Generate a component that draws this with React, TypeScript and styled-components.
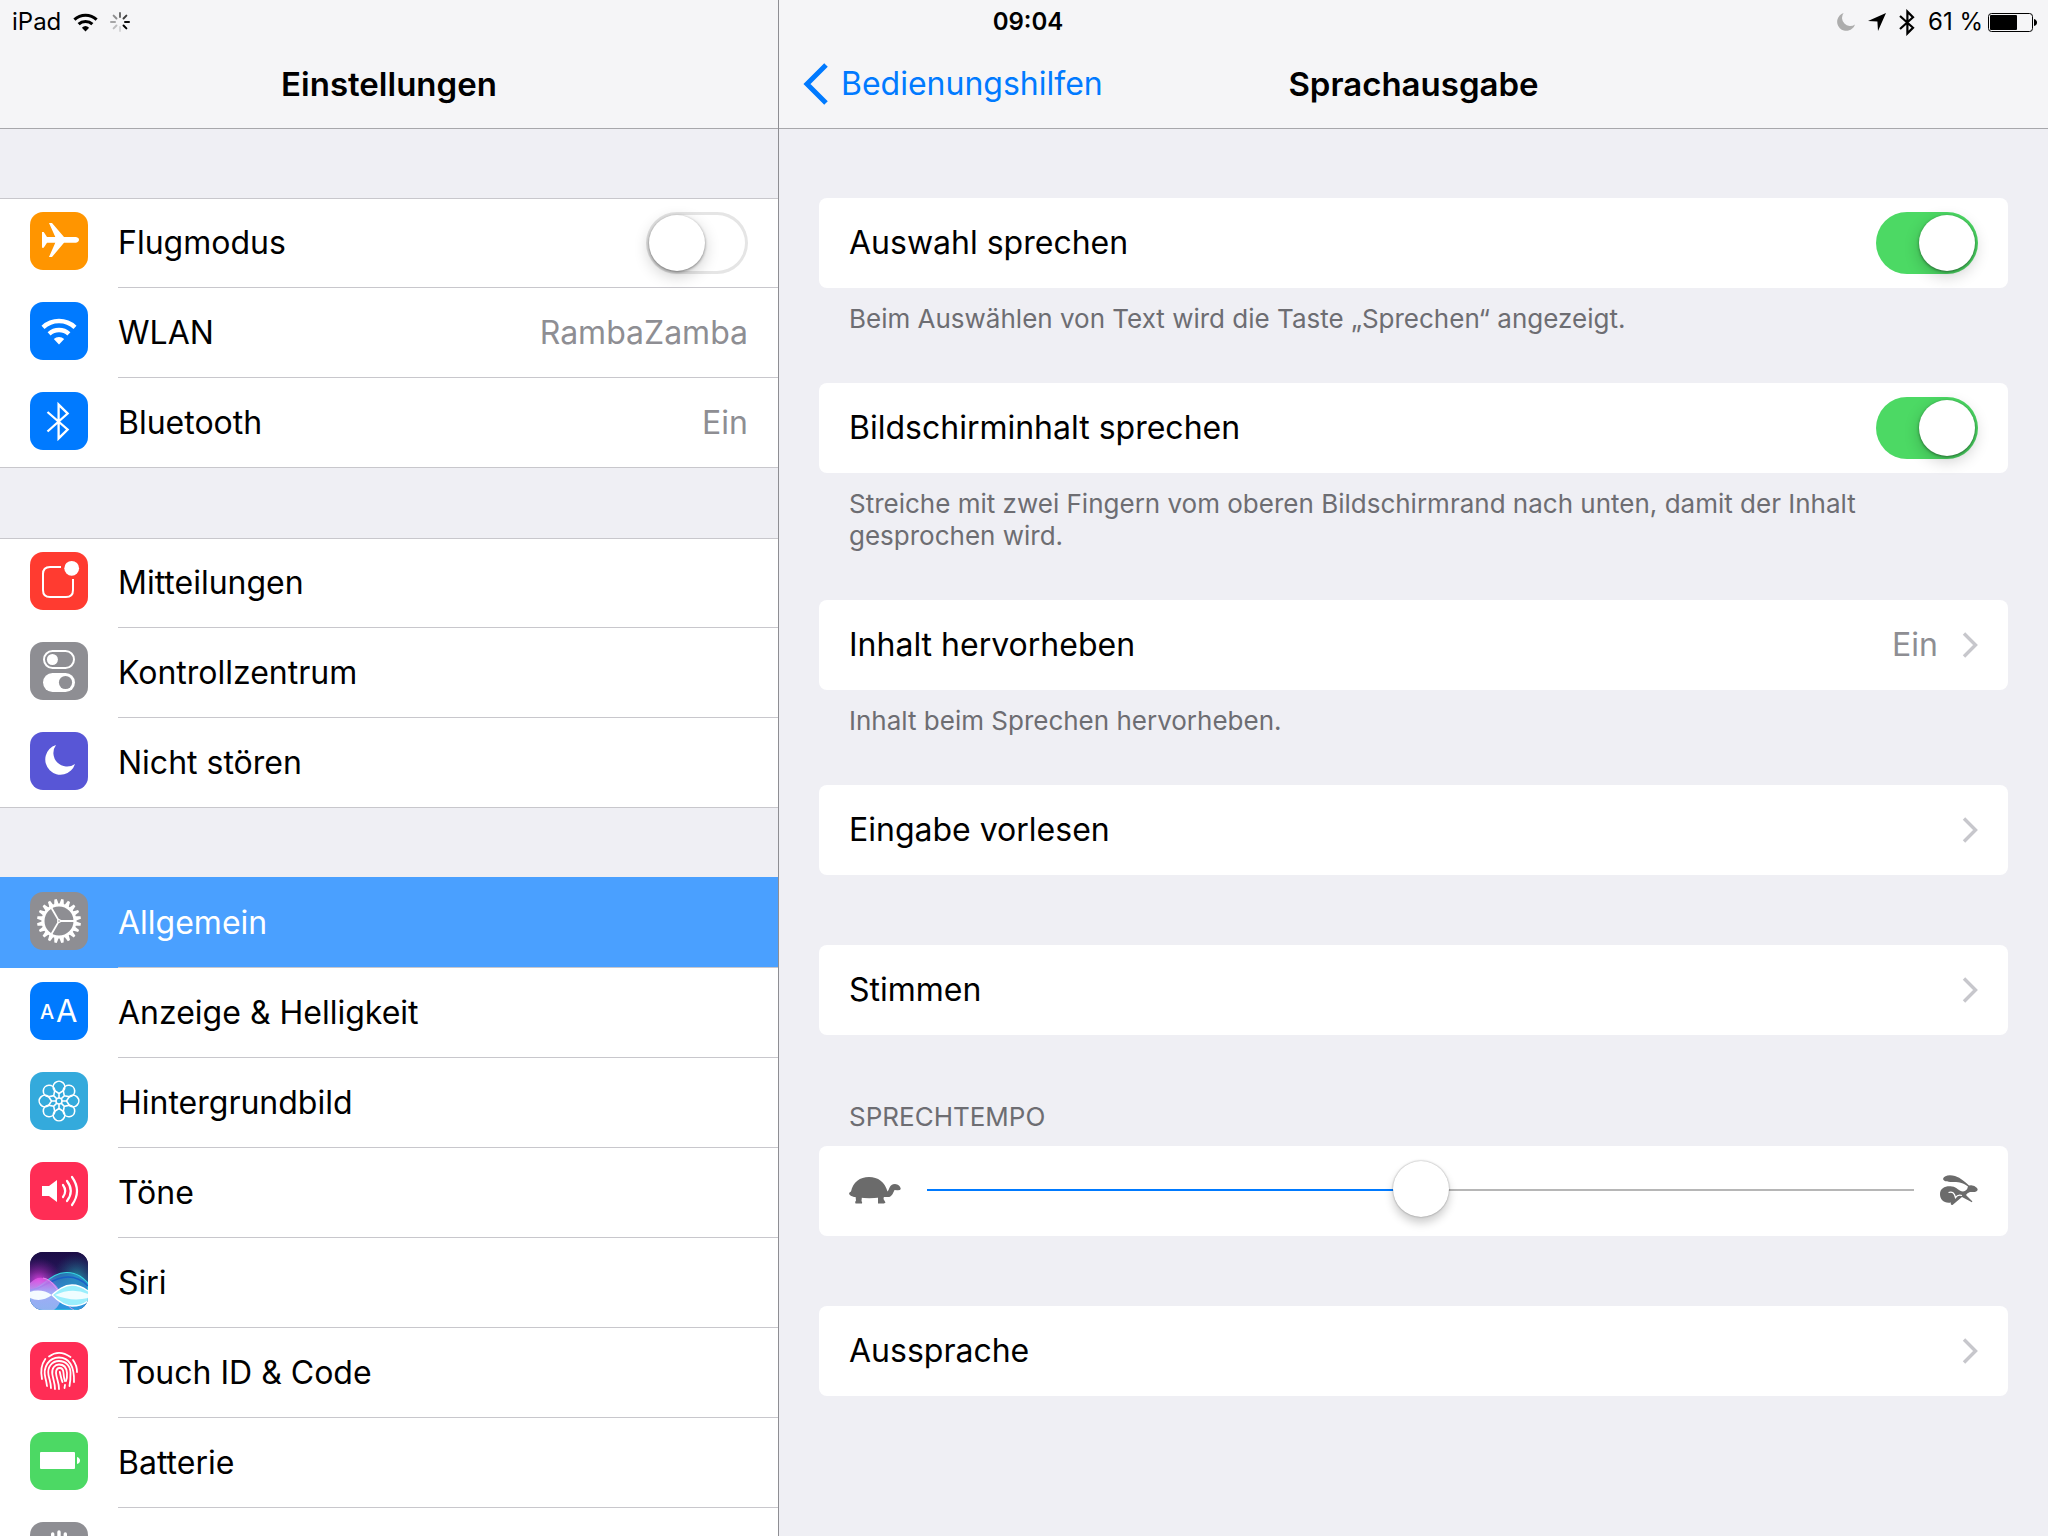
import React, { useId, useState } from "react";
import styled, { createGlobalStyle } from "styled-components";

const color = {
  page: "#efeff4",
  bar: "#f5f5f7",
  barLine: "#a7a7ab",
  line: "#c8c7cc",
  divider: "#8e8e93",
  blue: "#007aff",
  selected: "#4aa0ff",
  green: "#4cd964",
  grey: "#8e8e93",
  note: "#6d6d72",
};

const GlobalStyle = createGlobalStyle`
  *, *::before, *::after { box-sizing: border-box; }
  body {
    margin: 0;
    background: ${color.page};
    color: #000;
    font-family: Inter, "Liberation Sans", sans-serif;
    font-size: 32px;
    line-height: 40px;
  }
  h1, h2, p { margin: 0; }
  a { color: inherit; text-decoration: none; }
  svg { display: block; flex: none; }
`;

/* ---------- frame ---------- */

const Screen = styled.div`
  display: grid;
  grid-template-columns: 779px 1fr;
  grid-template-rows: 40px 1fr;
  height: 100vh;
  overflow: hidden;
`;

const StatusBar = styled.div`
  grid-column: 1 / 3;
  grid-row: 1;
  z-index: 1;
  display: grid;
  grid-template-columns: 1fr auto 1fr;
  align-items: center;
  padding: 2px 4px 0 12px;
  font-size: 24px;
`;

const StatusSide = styled.div<{ $end?: boolean }>`
  display: flex;
  align-items: center;
  justify-content: ${(p) => (p.$end ? "flex-end" : "flex-start")};
  gap: ${(p) => (p.$end ? "13px" : "12px")};
  padding-right: ${(p) => (p.$end ? "7px" : "0")};
`;

const Charge = styled.span`
  display: flex;
  align-items: center;
  gap: 5px;
`;

const Clock = styled.time`
  font-weight: 600;
`;

const Sidebar = styled.nav`
  grid-column: 1;
  grid-row: 1 / 3;
  min-height: 0;
  overflow: hidden;
  border-right: 1px solid ${color.divider};
`;

const Detail = styled.main`
  grid-column: 2;
  grid-row: 1 / 3;
  min-height: 0;
  overflow: hidden;
`;

const NavBar = styled.header`
  display: grid;
  grid-template-columns: 1fr auto 1fr;
  align-items: center;
  height: 128px;
  padding: 40px 24px 0;
  background: ${color.bar};
  box-shadow: 0 1px 0 ${color.barLine};
`;

const Title = styled.h1`
  grid-column: 2;
  font-size: 33px;
  font-weight: 600;
`;

const BackLink = styled.a`
  display: flex;
  align-items: center;
  gap: 12px;
  color: ${color.blue};
`;

/* ---------- sidebar list ---------- */

const MenuGroup = styled.div`
  margin-top: 70px;
`;

const MenuRow = styled.div<{ $selected?: boolean }>`
  display: flex;
  gap: 30px;
  height: 90px;
  padding-left: 30px;
  background: ${(p) => (p.$selected ? color.selected : "#fff")};
  color: ${(p) => (p.$selected ? "#fff" : "#000")};

  &:first-child {
    box-shadow: ${(p) =>
      p.$selected ? `0 -1px 0 ${color.selected}` : `inset 0 1px 0 ${color.line}`};
  }
  &:last-child {
    box-shadow: inset 0 -1px 0 ${color.line};
  }
`;

const Tile = styled.svg`
  width: 58px;
  height: 58px;
  margin-top: 14px;
  border-radius: 13px;
`;

const MenuBody = styled.span`
  display: flex;
  flex: 1;
  align-items: center;
  justify-content: space-between;
  padding-right: 30px;
  border-bottom: 1px solid ${color.line};
`;

const Value = styled.span`
  color: ${color.grey};
`;

/* ---------- detail cards ---------- */

const Cards = styled.div`
  padding: 70px 40px;
`;

const Section = styled.section`
  & + & { margin-top: 70px; }
`;

const NotedSection = styled.section`
  margin-bottom: 48px;
`;

const Card = styled.div`
  display: flex;
  align-items: center;
  justify-content: space-between;
  gap: 26px;
  height: 90px;
  padding: 0 30px;
  border-radius: 8px;
  background: #fff;
`;

const SliderCard = styled(Card)`
  padding-bottom: 2px;
`;

const Note = styled.p`
  padding: 15px 100px 0 30px;
  color: ${color.note};
  font-size: 26px;
  line-height: 32px;
`;

const SliderSection = styled.section`
  margin: 66px 0 70px;
`;

const Caption = styled.label`
  display: block;
  padding: 0 30px 13px;
  color: ${color.note};
  font-size: 26px;
  line-height: 32px;
`;

const Trailing = styled.span`
  display: flex;
  align-items: center;
  gap: 24px;
`;

/* ---------- controls ---------- */

const Switch = styled.input`
  appearance: none;
  flex: none;
  width: 102px;
  height: 62px;
  margin: 0;
  padding: 3px;
  border-radius: 31px;
  background: #fff;
  box-shadow: inset 0 0 0 3px #e5e5e5;
  cursor: pointer;

  &::before {
    content: "";
    display: block;
    width: 56px;
    height: 56px;
    border-radius: 50%;
    background: #fff;
    box-shadow: 0 1px 3px rgba(0, 0, 0, 0.45), 0 5px 16px rgba(0, 0, 0, 0.2);
  }
  &:checked {
    background: ${color.green};
    box-shadow: none;
  }
  &:checked::before {
    margin-left: 40px;
  }
`;

const Range = styled.input`
  appearance: none;
  flex: 1;
  min-width: 0;
  height: 58px;
  margin: 0;
  background: transparent;

  &::-webkit-slider-runnable-track {
    height: 2px;
    background: linear-gradient(
      to right,
      ${color.blue} var(--filled),
      #b6b6b6 var(--filled)
    );
  }
  &::-webkit-slider-thumb {
    appearance: none;
    width: 56px;
    height: 56px;
    margin-top: -28px;
    border-radius: 50%;
    background: #fff;
    box-shadow: 0 0 2px rgba(0, 0, 0, 0.4), 0 6px 10px rgba(0, 0, 0, 0.2);
  }
`;

/* ---------- status icons ---------- */

const WifiShape = () => (
  <g fill="none" stroke="currentColor" strokeWidth="4.4">
    <path d="M13 25.3A23.5 23.5 0 0 1 45 25.3" />
    <path d="M19.1 31.9A14.5 14.5 0 0 1 38.9 31.9" />
    <path d="M23.8 37A7.7 7.7 0 0 1 34.2 37L29 42.5Z" fill="currentColor" stroke="none" />
  </g>
);

const StatusWifi = () => (
  <svg width="25" height="19" viewBox="11 16 36 27" aria-hidden="true">
    <WifiShape />
  </svg>
);

const Spinner = () => {
  const shades = [0.55, 0.75, 0.95, 1, 0.12, 0.22, 0.32, 0.42];
  return (
    <svg width="20" height="20" viewBox="-10 -10 20 20" aria-hidden="true">
      {shades.map((opacity, i) => (
        <path
          key={i}
          d="M0 -9V-5"
          stroke="#000"
          strokeWidth="2"
          strokeLinecap="round"
          opacity={opacity}
          transform={`rotate(${i * 45})`}
        />
      ))}
    </svg>
  );
};

const StatusMoon = () => (
  <svg width="18" height="18" viewBox="15 13 30 30" aria-hidden="true">
    <path d="M26 13A15.2 15.2 0 1 0 45 32A13.6 13.6 0 0 1 26 13Z" fill="#adadad" />
  </svg>
);

const LocationArrow = () => (
  <svg width="18" height="18" viewBox="0 0 18 18" aria-hidden="true">
    <path d="M18 0L10 18L9.4 8.6L0 8Z" />
  </svg>
);

const StatusBluetooth = () => (
  <svg width="16" height="27" viewBox="0 0 16 27" aria-hidden="true">
    <path
      d="M1 7L14 18.8L8.4 24.4V2.6L14 8.2L1 20"
      fill="none"
      stroke="#000"
      strokeWidth="2.2"
    />
  </svg>
);

const StatusBattery = () => (
  <svg width="49" height="19" viewBox="0 0 49 19" aria-hidden="true">
    <rect x="0.5" y="0.5" width="44" height="18" rx="3" fill="none" stroke="#000" />
    <rect x="2" y="2" width="27" height="15" rx="1" />
    <path d="M46 6Q49 7 49 9.5T46 13Z" />
  </svg>
);

/* ---------- menu icons ---------- */

const Plane = () => (
  <path
    fill="#fff"
    d="M12 20H13.7L17 25H25.3L19 11H22L34 25H46Q49 25.6 49 27.8T46 30.7H34L22 45H19L25.3 30.7H17L13.7 35.7H12V27.8Z"
  />
);

const WhiteWifi = () => (
  <g color="#fff">
    <WifiShape />
  </g>
);

const Bluetooth = () => (
  <path
    fill="none"
    stroke="#fff"
    strokeWidth="2.3"
    d="M17.5 20L37.6 37.5L28.6 46.4V12.6L37.6 21.5L17.5 39.5"
  />
);

const Notices = () => (
  <>
    <path
      fill="none"
      stroke="#fff"
      strokeWidth="2"
      d="M31 15H20Q13 15 13 22V38Q13 45 20 45H36Q43 45 43 38V27"
    />
    <circle cx="41.7" cy="16.3" r="7.4" fill="#fff" />
  </>
);

const Controls = () => (
  <>
    <rect x="14" y="9" width="30" height="17" rx="8.5" fill="none" stroke="#fff" strokeWidth="2" />
    <circle cx="22.4" cy="17.5" r="5.5" fill="#fff" />
    <rect x="13" y="31" width="32" height="19" rx="9.5" fill="#fff" />
    <circle cx="35.5" cy="40.5" r="6.6" fill="#8e8e93" />
  </>
);

const Moon = () => (
  <path fill="#fff" d="M26 13A15.2 15.2 0 1 0 45 32A13.6 13.6 0 0 1 26 13Z" />
);

const Gear = () => (
  <g transform="translate(29 29)">
    <circle r="16" fill="none" stroke="#fff" strokeWidth="3" />
    {Array.from({ length: 20 }, (_, i) => (
      <path
        key={i}
        d="M-2.3 -16.5L-1.2 -22H1.2L2.3 -16.5Z"
        fill="#fff"
        transform={`rotate(${i * 18 + 9})`}
      />
    ))}
    {[0, 120, 240].map((turn) => (
      <path
        key={turn}
        d="M1 0H15"
        stroke="#fff"
        strokeWidth="1.8"
        transform={`rotate(${turn})`}
      />
    ))}
    <circle r="2" fill="#fff" />
    <circle r="0.8" fill="#8e8e93" />
  </g>
);

const Letters = () => (
  <g fill="#fff" fontFamily="Inter, sans-serif">
    <text x="10" y="37" fontSize="20" fontWeight="500">A</text>
    <text x="26" y="40" fontSize="31">A</text>
  </g>
);

const Flower = () => (
  <g fill="none" stroke="#fff" strokeWidth="1.6">
    {Array.from({ length: 8 }, (_, i) => (
      <path
        key={i}
        d="M29 26V21.5L24.3 18.4A5.8 5.8 0 1 1 33.7 18.4L29 21.5"
        transform={`rotate(${i * 45} 29 29)`}
      />
    ))}
    <circle cx="29" cy="29" r="3" />
  </g>
);

const Speaker = () => (
  <>
    <path fill="#fff" d="M12 24H19L27 18V40L19 34H12Z" />
    <g fill="none" stroke="#fff" strokeWidth="2.2" strokeLinecap="round">
      <path d="M33 23Q37.4 29 33 35" />
      <path d="M37 19Q44.6 29 37 39" />
      <path d="M42 15Q52 29 42 43" />
    </g>
  </>
);

const Siri = () => {
  const id = useId();
  return (
    <>
      <defs>
        <linearGradient id={`${id}sky`} x1="0" y1="0" x2="0" y2="1">
          <stop offset="0" stopColor="#1b0c45" />
          <stop offset="0.35" stopColor="#26175a" />
          <stop offset="0.7" stopColor="#3a8ad8" />
          <stop offset="1" stopColor="#2f8fdc" />
        </linearGradient>
        <radialGradient id={`${id}pink`} cx="0.15" cy="0.5" r="0.4">
          <stop offset="0" stopColor="#d63ad8" />
          <stop offset="1" stopColor="#7a1a8c" stopOpacity="0" />
        </radialGradient>
        <radialGradient id={`${id}teal`} cx="0.8" cy="0.42" r="0.4">
          <stop offset="0" stopColor="#1f9aa8" stopOpacity="0.8" />
          <stop offset="1" stopColor="#1a5070" stopOpacity="0" />
        </radialGradient>
        <linearGradient id={`${id}haze`} x1="0" y1="0" x2="0" y2="1">
          <stop offset="0" stopColor="#e64fe4" />
          <stop offset="0.45" stopColor="#b9b2ff" />
          <stop offset="1" stopColor="#a9b8f4" />
        </linearGradient>
      </defs>
      <rect width="58" height="58" fill={`url(#${id}sky)`} />
      <rect width="58" height="58" fill={`url(#${id}pink)`} />
      <rect width="58" height="58" fill={`url(#${id}teal)`} />
      <path
        d="M0 40C14 34 22 20 37 20.5C48 21 53 26 58 31V58H0Z"
        fill="#2f9be0"
        fillOpacity="0.6"
        stroke="#35d5e0"
        strokeWidth="1.2"
      />
      <path d="M0 38C12 38 22 25 38 25C48 25 54 30 58 34" fill="none" stroke="#1a5fc8" strokeWidth="1.4" />
      <path
        d="M0 31C5 26 9 25 13 26C22 27 28 35 32 43C31 50 28 55 24 58H0Z"
        fill={`url(#${id}haze)`}
        fillOpacity="0.8"
      />
      <path d="M13 26C22 27 28 39 34 48C37 53 40 56 44 58" fill="none" stroke="#ee9df4" strokeWidth="0.8" />
      <path d="M22 43C28 38 34 33 42 33C49 33 54 36 58 39V49C53 53 48 54 42 54C34 54 28 49 22 43Z" fill="#9aeefc" />
      <path d="M22 43C28 38 34 33 42 33C49 33 54 36 58 39M22 43C28 49 34 54 42 54C48 54 53 53 58 49" fill="none" stroke="#fff" strokeWidth="1.4" />
      <path d="M25 43Q42 35 58 42V46Q42 50 25 43Z" fill="#fff" fillOpacity="0.85" />
      <path d="M0 40Q11 36 22 43Q11 51 0 46Z" fill="#f4fbff" />
    </>
  );
};

const Fingerprint = () => (
  <g fill="none" stroke="#fff" strokeWidth="1.8" strokeLinecap="round">
    <path d="M19 14.5Q29 7 40.5 15" />
    <path d="M15.3 17Q9.5 25 12 37" />
    <path d="M43 18Q47 23.5 47 30" />
    <path d="M17 44Q16.5 40 15.4 36C12.5 25 19 15.5 29 15.5C39 15.5 44.5 24 44 40" />
    <path d="M21 46C21 41 19.5 38 18.5 33C17 25 22 19 29 19C36 19 40.5 24 40.5 31Q40.6 38 39.5 44" />
    <path d="M25 47C25 41 23 37 22.3 32C21.5 26 25 22.5 29 22.5C34 22.5 36.6 26 37 31Q37.3 36 36 39" />
    <path d="M29 47C29 40 26.5 37 26 31C26 27.5 28 26 29.8 26C32 26 33.3 28 33.5 31Q34 37 35 39" />
    <path d="M29.8 30Q31.5 38 32.5 40M34.5 46L35 43" />
  </g>
);

const Battery = () => (
  <g fill="#fff">
    <rect x="10" y="20" width="35" height="17" rx="1" />
    <path d="M47 25Q50 26 50 28.5T47 32Z" />
  </g>
);

const Hand = () => (
  <g fill="none" stroke="#fff" strokeWidth="3.4" strokeLinecap="round">
    <path d="M22.7 12V32M29 10V32M35.3 12V32M41 18V34M16 30L23 40" />
    <path d="M23 36Q26 46 32 44T41 32" strokeWidth="8" />
  </g>
);

/* ---------- detail icons ---------- */

const BackChevron = () => (
  <svg width="26" height="42" viewBox="0 0 26 42" aria-hidden="true">
    <path d="M23 2L4 21L23 40" fill="none" stroke="currentColor" strokeWidth="5" />
  </svg>
);

const Chevron = () => (
  <svg width="16" height="26" viewBox="0 0 16 26" aria-hidden="true">
    <path d="M2 1.500L13.500 13L2 24.500" fill="none" stroke="#c7c7cc" strokeWidth="3.4" />
  </svg>
);

const Turtle = () => (
  <svg width="52" height="27" viewBox="0 0 52 27" aria-hidden="true">
    <g fill="#6b6b6b">
      <path d="M0 17Q0 15 2 14.5C4 5 11 0 20 0C29 0 36 5 38.5 14.5C40.5 13 40 7 46 7Q51 7.5 51.8 12Q51 13.5 48 13.2L45.5 13C44 16 43 19.5 40 20H5Q1 19 0 17Z" />
      <path d="M6.5 19H13L12.5 24Q13.5 25 13 26.5H6.5Q5.5 25 7 23.5ZM29 19H35L34.5 22L36.5 25.5L35 26.5H29Z" />
      <path d="M10 19H31V20.5Q20 21.8 10 20.5Z" />
    </g>
  </svg>
);

const Hare = () => (
  <svg width="38" height="30" viewBox="0 0 38 30" aria-hidden="true">
    <path
      fill="#6b6b6b"
      d="M3 4C4 0 10-.5 15 1C21 3 25 7 29 10.5Q34 9.5 37 13Q39 16 35 17H30Q27 18 26 20L32 26Q33 28 30.5 26.5L22 22L12.5 30Q10 30 11 27.5C4 28.5 0 25 0 19C0 13 6 10.5 12 11.5C17 12 19 16.5 23 16.5Q27 16 28 11.500C23 8 20 7 14 7C9 7 4 7 3 4Z"
    />
    <path d="M8.5 17.5Q14 15.5 15.5 22.5Q18 19 22 20.5" fill="none" stroke="#fff" strokeWidth="1.3" />
  </svg>
);

/* ---------- data ---------- */

type Entry = {
  label?: string;
  name?: string;
  tile: string;
  icon: React.FC;
  value?: string;
  toggle?: boolean;
  selected?: boolean;
};

const menu: Entry[][] = [
  [
    { label: "Flugmodus", tile: "#ff9500", icon: Plane, toggle: true },
    { label: "WLAN", tile: color.blue, icon: WhiteWifi, value: "RambaZamba" },
    { label: "Bluetooth", tile: color.blue, icon: Bluetooth, value: "Ein" },
  ],
  [
    { label: "Mitteilungen", tile: "#ff3b30", icon: Notices },
    { label: "Kontrollzentrum", tile: color.grey, icon: Controls },
    { label: "Nicht stören", tile: "#5856d6", icon: Moon },
  ],
  [
    { label: "Allgemein", tile: color.grey, icon: Gear, selected: true },
    { label: "Anzeige & Helligkeit", tile: color.blue, icon: Letters },
    { label: "Hintergrundbild", tile: "#34aadc", icon: Flower },
    { label: "Töne", tile: "#ff2d55", icon: Speaker },
    { label: "Siri", tile: "#1b0c45", icon: Siri },
    { label: "Touch ID & Code", tile: "#ff2d55", icon: Fingerprint },
    { label: "Batterie", tile: color.green, icon: Battery },
    { name: "Datenschutz", tile: color.grey, icon: Hand },
  ],
];

/* ---------- composed parts ---------- */

const MenuItem = ({ entry }: { entry: Entry }) => {
  const Icon = entry.icon;
  const [on, setOn] = useState(false);
  const content = (
    <>
      <Tile viewBox="0 0 58 58" aria-hidden="true">
        <rect width="58" height="58" fill={entry.tile} />
        <Icon />
      </Tile>
      <MenuBody>
        <span>{entry.label}</span>
        {entry.value && <Value>{entry.value}</Value>}
        {entry.toggle && (
          <Switch type="checkbox" checked={on} onChange={() => setOn(!on)} />
        )}
      </MenuBody>
    </>
  );
  return entry.toggle ? (
    <MenuRow as="label">{content}</MenuRow>
  ) : (
    <MenuRow
      as="a"
      href="#"
      aria-label={entry.name}
      aria-current={entry.selected ? "page" : undefined}
      $selected={entry.selected}
    >
      {content}
    </MenuRow>
  );
};

const SwitchCard = ({ label }: { label: string }) => {
  const [on, setOn] = useState(true);
  return (
    <Card as="label">
      <span>{label}</span>
      <Switch type="checkbox" checked={on} onChange={() => setOn(!on)} />
    </Card>
  );
};

const LinkCard = ({ label, value }: { label: string; value?: string }) => (
  <Card as="a" href="#">
    <span>{label}</span>
    <Trailing>
      {value && <Value>{value}</Value>}
      <Chevron />
    </Trailing>
  </Card>
);

export default function App() {
  const [rate, setRate] = useState(50);
  return (
    <>
      <GlobalStyle />
      <Screen>
        <StatusBar>
          <StatusSide>
            <span>iPad</span>
            <StatusWifi />
            <Spinner />
          </StatusSide>
          <Clock>09:04</Clock>
          <StatusSide $end>
            <StatusMoon />
            <LocationArrow />
            <StatusBluetooth />
            <Charge>
              <span>61 %</span>
              <StatusBattery />
            </Charge>
          </StatusSide>
        </StatusBar>

        <Sidebar>
          <NavBar>
            <Title>Einstellungen</Title>
          </NavBar>
          {menu.map((group, i) => (
            <MenuGroup key={i}>
              {group.map((entry) => (
                <MenuItem key={entry.label ?? entry.name} entry={entry} />
              ))}
            </MenuGroup>
          ))}
        </Sidebar>

        <Detail>
          <NavBar>
            <BackLink href="#">
              <BackChevron />
              Bedienungshilfen
            </BackLink>
            <Title as="h2">Sprachausgabe</Title>
          </NavBar>
          <Cards>
            <NotedSection>
              <SwitchCard label="Auswahl sprechen" />
              <Note>Beim Auswählen von Text wird die Taste „Sprechen“ angezeigt.</Note>
            </NotedSection>
            <NotedSection>
              <SwitchCard label="Bildschirminhalt sprechen" />
              <Note>
                Streiche mit zwei Fingern vom oberen Bildschirmrand nach unten, damit der
                Inhalt gesprochen wird.
              </Note>
            </NotedSection>
            <NotedSection>
              <LinkCard label="Inhalt hervorheben" value="Ein" />
              <Note>Inhalt beim Sprechen hervorheben.</Note>
            </NotedSection>
            <Section>
              <LinkCard label="Eingabe vorlesen" />
            </Section>
            <Section>
              <LinkCard label="Stimmen" />
            </Section>
            <SliderSection>
              <Caption htmlFor="rate">SPRECHTEMPO</Caption>
              <SliderCard>
                <Turtle />
                <Range
                  id="rate"
                  type="range"
                  min="0"
                  max="100"
                  value={rate}
                  onChange={(e) => setRate(Number(e.target.value))}
                  style={{ "--filled": `${rate}%` } as React.CSSProperties}
                />
                <Hare />
              </SliderCard>
            </SliderSection>
            <Section>
              <LinkCard label="Aussprache" />
            </Section>
          </Cards>
        </Detail>
      </Screen>
    </>
  );
}
